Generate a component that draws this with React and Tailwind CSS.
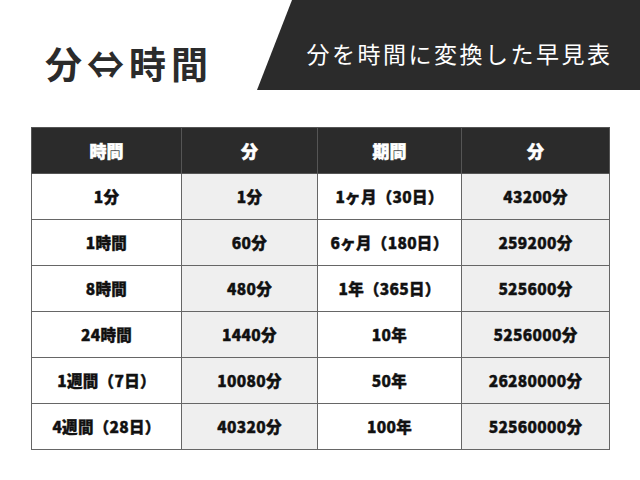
import React from "react";

const rows = [
  ["1分", "1分", "1ヶ月（30日）", "43200分"],
  ["1時間", "60分", "6ヶ月（180日）", "259200分"],
  ["8時間", "480分", "1年（365日）", "525600分"],
  ["24時間", "1440分", "10年", "5256000分"],
  ["1週間（7日）", "10080分", "50年", "26280000分"],
  ["4週間（28日）", "40320分", "100年", "52560000分"],
];

export default function App() {
  return (
    <div
      className="w-[640px] h-[480px] bg-white overflow-hidden"
      style={{ fontFamily: '"Noto Sans CJK JP", "Noto Sans", sans-serif' }}
    >
      <div className="flex h-[90px]">
        <div className="w-[257px] pl-[45px] pt-[45px]">
          <h1 className="text-[37px] leading-[37px] font-bold text-[#2b2b2b] tracking-[5px] whitespace-nowrap">
            分⇔時間
          </h1>
        </div>
        <div className="flex-1 bg-[#2b2b2b] [clip-path:polygon(35px_0,100%_0,100%_100%,0_100%)] flex items-center justify-center pl-[22px] pt-[16px]">
          <span className="text-white text-[23px] leading-none tracking-[2.5px] whitespace-nowrap">
            分を時間に変換した早見表
          </span>
        </div>
      </div>
      <table className="mt-[37px] ml-[31px] border-collapse table-fixed w-[578px]">
        <colgroup>
          <col className="w-[150px]" />
          <col className="w-[136px]" />
          <col className="w-[144px]" />
          <col className="w-[148px]" />
        </colgroup>
        <thead>
          <tr className="h-[46px] bg-[#2b2b2b] text-white">
            {["時間", "分", "期間", "分"].map((h, i) => (
              <th
                key={i}
                className="border border-[#555] text-[17px] font-black text-center [-webkit-text-stroke:0.5px_#fff]"
              >
                {h}
              </th>
            ))}
          </tr>
        </thead>
        <tbody>
          {rows.map((r, ri) => (
            <tr key={ri} className="h-[46px]">
              {r.map((c, ci) => (
                <td
                  key={ci}
                  className={
                    "border border-[#666] text-[15.5px] font-black text-center text-[#111] whitespace-nowrap tracking-[0.3px] [-webkit-text-stroke:0.4px_#111] " +
                    (ci % 2 === 1 ? "bg-[#efefef]" : "bg-white")
                  }
                >
                  {c}
                </td>
              ))}
            </tr>
          ))}
        </tbody>
      </table>
    </div>
  );
}
